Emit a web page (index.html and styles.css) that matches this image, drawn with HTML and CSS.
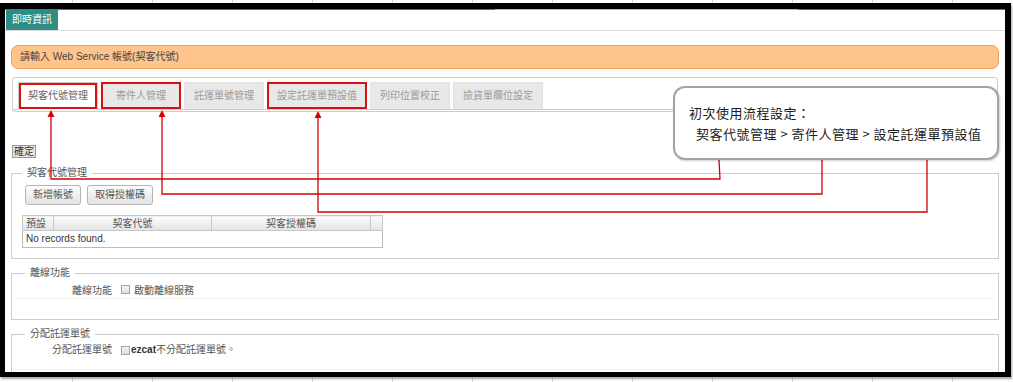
FILE: index.html
```html
<!DOCTYPE html>
<html lang="zh-Hant">
  <head>
    <meta charset="UTF-8" />
    <meta name="viewport" content="width=device-width, initial-scale=1.0" />
    <title>即時資訊 - 契客代號管理</title>
    <link rel="stylesheet" href="styles.css">
  </head>
  <body>
    <div class="frame">
      <div class="topbar"><span class="toptab">即時資訊</span></div>

      <div class="page">
        <div class="alert">請輸入 Web Service 帳號(契客代號)</div>

        <div class="tabs">
          <ul class="tab-nav">
            <li class="tab active marked">契客代號管理</li>
            <li class="tab marked">寄件人管理</li>
            <li class="tab">託運單號管理</li>
            <li class="tab marked">設定託運單預設值</li>
            <li class="tab">列印位置校正</li>
            <li class="tab">撿貨單欄位設定</li>
          </ul>
        </div>

        <button class="btn-ok">確定</button>

        <div class="group">
          <div class="group-title">契客代號管理</div>
          <div class="actions">
            <button class="btn">新增帳號</button>
            <button class="btn">取得授權碼</button>
          </div>
          <table class="grid">
            <thead>
              <tr>
                <th class="col-default">預設</th>
                <th class="col-code">契客代號</th>
                <th class="col-auth">契客授權碼</th>
                <th class="col-pad"></th>
              </tr>
            </thead>
            <tbody>
              <tr><td colspan="4">No records found.</td></tr>
            </tbody>
          </table>
        </div>

        <div class="group form">
          <div class="group-title">離線功能</div>
          <div class="form-row">
            <span class="form-label">離線功能</span>
            <label class="check spaced"><span class="box"></span>啟動離線服務</label>
          </div>
        </div>

        <div class="group form">
          <div class="group-title">分配託運單號</div>
          <div class="form-row tall">
            <span class="form-label">分配託運單號</span>
            <label class="check"><span class="box"></span><b>ezcat</b>不分配託運單號。</label>
          </div>
        </div>
      </div>

      <!-- annotation arrows: tab -> step in the callout -->
      <svg class="guides" width="1000" height="363" viewBox="0 0 1000 363">
        <g fill="none" stroke="#d40000" stroke-width="1.3">
          <polyline points="46,107 46,170 715,170 714,151" />
          <polyline points="157,107 157,185 817,185 817,151" />
          <polyline points="313,107 313,203 922,203 922,151" />
        </g>
        <g fill="#d40000">
          <polygon points="46,101 42.5,108 49.5,108" />
          <polygon points="157,101 153.5,108 160.5,108" />
          <polygon points="313,102 309.5,109 316.5,109" />
        </g>
      </svg>

      <div class="callout">
        <p>初次使用流程設定：</p>
        <p class="steps">契客代號管理 &gt; 寄件人管理 &gt; 設定託運單預設值</p>
      </div>
    </div>
  </body>
</html>
```

FILE: styles.css
```css
body {
  margin: 0;
  width: 1013px;
  height: 382px;
  overflow: hidden;
  background-color: #fff;
  background-image: linear-gradient(to right, #d9d9d9 1px, transparent 1px);
  background-size: 80px 100%;
  background-position: 72px 0;
  font-family: "Liberation Sans", "Noto Sans CJK TC", sans-serif;
  font-size: 10px;
  color: #555;
}
.frame {
  position: relative;
  width: 1000px;
  height: 363px;
  margin-top: 3px;
  border-style: solid;
  border-color: #000;
  border-width: 6px 6px 5px 5px;
  background-color: #fff;
  overflow: hidden;
  box-shadow: 1px 2px 2px rgba(0, 0, 0, 0.35);
}
.topbar {
  display: flex;
  padding-top: 1px;
  border-bottom: 1px solid #dcdcdc;
  background: linear-gradient(to right, #2b8a80 0 490px, #b8b8b8 490px 793px, #2b8a80 793px) top / 100% 1px no-repeat;
}
.toptab {
  margin-left: 1px;
  width: 52px;
  height: 20px;
  line-height: 20px;
  text-align: center;
  background-color: #2d8c83;
  color: #fff;
}
.page {
  padding: 0 6px;
}
.alert {
  margin-top: 14px;
  height: 22px;
  line-height: 22px;
  padding-left: 8px;
  border: 1px solid #eea257;
  border-radius: 7px;
  background-color: #ffc48d;
  color: #444;
}
.tabs {
  margin: 8px 1px 0;
  padding-bottom: 1px;
  border: 1px solid #ccc;
  border-radius: 3px;
}
.tab-nav {
  display: flex;
  gap: 3px;
  list-style: none;
  margin: 0;
  padding: 4px 5px 0;
  border-bottom: 1px solid #ccc;
}
.tab {
  box-sizing: border-box;
  min-width: 80px;
  height: 27px;
  line-height: 25px;
  padding: 0 9px;
  text-align: center;
  background-color: #e8e8e8;
  border: 1px solid #e2e2e2;
  border-bottom: none;
  color: #9a9a9a;
}
.tab.active {
  height: 28px;
  margin-bottom: -1px;
  background-color: #fff;
  border-color: #ccc;
  color: #666;
}
.marked {
  outline: 2px solid #dc1010;
  outline-offset: -2px;
}
.tab.active.marked {
  outline-offset: -3px;
}
button {
  box-sizing: border-box;
}
.btn-ok {
  display: block;
  height: 13px;
  margin: 33px 0 0 1px;
  padding: 0 1px;
  font: 10px/11px "Liberation Sans", "Noto Sans CJK TC", sans-serif;
  border: 1px solid #999;
  background-color: #e4e4e4;
  color: #333;
}
.group {
  margin-top: 14px;
  padding: 0 10px 10px;
  border: 1px solid #ccc;
}
.btn-ok + .group {
  margin-top: 15px;
}
.group-title {
  display: table;
  margin: -7px 0 0 0;
  padding: 0 5px;
  line-height: 12px;
  background-color: #fff;
  color: #555;
}
.actions {
  display: flex;
  gap: 6px;
  margin-top: 6px;
  padding-left: 3px;
}
.btn {
  height: 20px;
  padding: 0 7px;
  font: 10px/18px "Liberation Sans", "Noto Sans CJK TC", sans-serif;
  border: 1px solid #b5b5b5;
  border-radius: 3px;
  background: linear-gradient(#fdfdfd, #e2e2e2);
  color: #555;
}
.grid {
  width: 361px;
  margin-top: 10px;
  border-collapse: collapse;
  border: 1px solid #bbb;
  table-layout: fixed;
}
.grid th {
  height: 14px;
  padding: 0 3px;
  font-weight: normal;
  line-height: 13px;
  color: #555;
  border: 1px solid #c8c8c8;
  background: linear-gradient(#fcfcfc, #e4e4e4);
}
.grid .col-default {
  width: 24px;
  text-align: left;
}
.grid .col-code {
  width: 151px;
}
.grid .col-auth {
  width: 152px;
}
.grid td {
  height: 16px;
  padding: 0 3px;
  line-height: 16px;
  color: #333;
}
.group.form {
  padding: 0 5px 20px 3px;
}
.group.form .group-title {
  margin-left: 10px;
}
.form-row {
  display: flex;
  align-items: center;
  height: 18px;
  margin-top: 1px;
  border-bottom: 1px solid #eee;
}
.form-row.tall {
  align-items: flex-start;
  height: 28px;
  line-height: 18px;
}
.form-row.tall .check {
  height: 18px;
}
.form-label {
  width: 97px;
  text-align: right;
}
.check {
  display: flex;
  align-items: center;
  margin-left: 9px;
}
.check b {
  color: #333;
}
.box {
  box-sizing: border-box;
  width: 9px;
  height: 9px;
  margin-right: 1px;
  border: 1px solid #a5a5a5;
  background: linear-gradient(#f4f4f4, #dedede);
}
.check.spaced .box {
  margin-right: 4px;
}
.guides {
  position: absolute;
  left: 0;
  top: 0;
  pointer-events: none;
}
.callout {
  position: absolute;
  left: 668px;
  top: 77px;
  box-sizing: border-box;
  width: 326px;
  height: 74px;
  padding: 14px 0 0 14px;
  border: 2px solid #a3a3a3;
  border-radius: 12px;
  background-color: #fff;
  box-shadow: 1px 1px 2px rgba(0, 0, 0, 0.2);
  font-family: "Noto Sans CJK TC", sans-serif;
  font-size: 13px;
  letter-spacing: 0.5px;
  color: #1d1d1d;
}
.callout p {
  margin: 0;
  line-height: 21px;
}
.callout .steps {
  padding-left: 7px;
  white-space: pre;
}
```
